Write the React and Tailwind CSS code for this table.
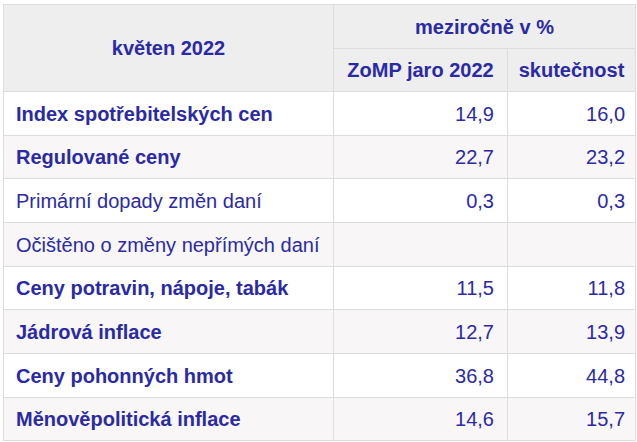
import React from 'react';

const rows = [
    { label: 'Index spotřebitelských cen', a: '14,9', b: '16,0', bold: true, h: 'h-[44px]' },
    { label: 'Regulované ceny', a: '22,7', b: '23,2', bold: true, h: 'h-[43px]' },
    { label: 'Primární dopady změn daní', a: '0,3', b: '0,3', bold: false, h: 'h-[44px]' },
    { label: 'Očištěno o změny nepřímých daní', a: '', b: '', bold: false, h: 'h-[44px]' },
    { label: 'Ceny potravin, nápoje, tabák', a: '11,5', b: '11,8', bold: true, h: 'h-[43px]' },
    { label: 'Jádrová inflace', a: '12,7', b: '13,9', bold: true, h: 'h-[44px]' },
    { label: 'Ceny pohonných hmot', a: '36,8', b: '44,8', bold: true, h: 'h-[44px]' },
    { label: 'Měnověpolitická inflace', a: '14,6', b: '15,7', bold: true, h: 'h-[43px]' },
];

const App = () => {
    return (
        <div className="w-[637px] h-[442px] bg-white pt-[4px] pl-[3px]" style={{ fontFamily: '"Liberation Sans", Arial, sans-serif' }}>
            <table className="w-[632px] border-collapse text-[20px] text-[#2a2aa6] table-fixed">
                <colgroup>
                    <col className="w-[330px]" />
                    <col className="w-[174px]" />
                    <col className="w-[128px]" />
                </colgroup>
                <thead>
                    <tr className="h-[44px] bg-[#eeeeee]">
                        <th rowSpan={2} className="border border-[#dddddd] font-bold text-center align-middle">květen 2022</th>
                        <th colSpan={2} className="border border-[#dddddd] font-bold text-center">meziročně v %</th>
                    </tr>
                    <tr className="h-[43px] bg-[#eeeeee]">
                        <th className="border border-[#dddddd] font-bold text-center">ZoMP jaro 2022</th>
                        <th className="border border-[#dddddd] font-bold text-center">skutečnost</th>
                    </tr>
                </thead>
                <tbody>
                    {rows.map((r, i) => (
                        <tr key={r.label} className={`${r.h} ${i % 2 === 1 ? 'bg-[#f8f6f7]' : 'bg-white'}`}>
                            <td className={`border border-[#dddddd] pl-[12px] whitespace-nowrap ${r.bold ? 'font-bold' : ''}`}>{r.label}</td>
                            <td className="border border-[#dddddd] pr-[13px] text-right">{r.a}</td>
                            <td className="border border-[#dddddd] pr-[10px] text-right">{r.b}</td>
                        </tr>
                    ))}
                </tbody>
            </table>
        </div>
    );
};

export default App;
